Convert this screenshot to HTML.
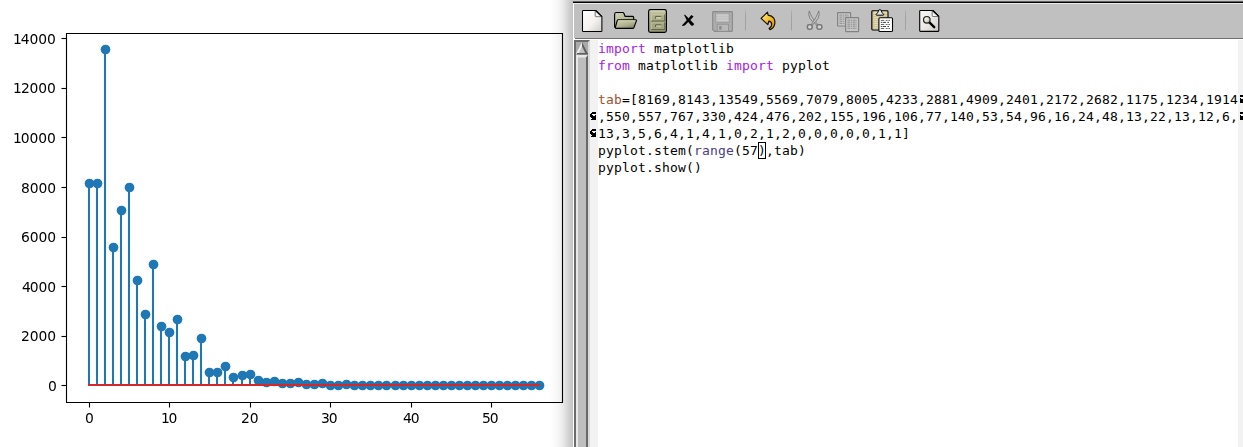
<!DOCTYPE html>
<html lang="en">
<head>
<meta charset="utf-8">
<title>stem plot / emacs</title>
<style>
html,body{margin:0;padding:0;background:#fff;}
body{width:1243px;height:447px;position:relative;overflow:hidden;font-family:"DejaVu Sans","Liberation Sans",sans-serif;}
#shade{position:absolute;left:549px;top:0;width:24px;height:447px;background:linear-gradient(to right,#ffffff 0%,#fcfcfc 16.7%,#f7f7f7 33.3%,#f0f0f0 50%,#e6e6e6 62.5%,#d9d9d9 75%,#cccccc 87.5%,#c3c3c3 100%);}
#plot{position:absolute;left:0;top:0;will-change:transform;}
#emacs{position:absolute;left:573px;top:0;width:670px;height:447px;background:#fff;overflow:hidden;}
#topedge0{position:absolute;left:0;top:0;width:670px;height:1px;background:#c9c9c9;}
#topedge1{position:absolute;left:0;top:1px;width:670px;height:1px;background:#646464;}
#topblack{position:absolute;left:0;top:2px;width:670px;height:1px;background:#000;}
#toolbar{position:absolute;left:0;top:3px;width:670px;height:35px;background:#c0c0c0;border-top:1px solid #ececec;border-left:1px solid #ffffff;box-sizing:border-box;}
#tbbottom{position:absolute;left:2px;top:38px;width:668px;height:1px;background:#707070;}
#leftline{position:absolute;left:0;top:38px;width:1px;height:409px;background:#fcfcfc;}
#sb{position:absolute;left:1px;top:40px;}
#lfringe{position:absolute;left:17px;top:40px;width:8px;height:407px;background:#f2f2f2;}
#rfringe{position:absolute;left:665px;top:40px;width:8px;height:407px;background:#f2f2f2;}
#code{position:absolute;left:25px;top:40px;margin:0;font-family:"DejaVu Sans Mono","Liberation Mono",monospace;font-size:13px;line-height:17px;color:#000;white-space:pre;letter-spacing:0.174px;}
.k{color:#a020f0;}
.v{color:#a0522d;}
.b{color:#483d8b;}
#cursor{position:absolute;left:185px;top:142px;width:8px;height:17px;border:1px solid #000;box-sizing:border-box;}
.fr{position:absolute;}
.tb{position:absolute;top:0;}
.sep{position:absolute;top:8px;width:1px;height:23px;background:#a2a2a2;}
</style>
</head>
<body>
<div id="shade"></div>
<svg id="plot" width="573" height="447" viewBox="0 0 573 447">
<g stroke="#1f77b4" stroke-width="2.08" fill="none">
<path d="M89 385.5V182.82"/>
<path d="M97 385.5V183.46"/>
<path d="M105 385.5V49.40"/>
<path d="M113 385.5V247.30"/>
<path d="M121 385.5V209.85"/>
<path d="M129 385.5V186.88"/>
<path d="M137 385.5V280.43"/>
<path d="M145 385.5V313.95"/>
<path d="M153 385.5V263.66"/>
<path d="M161 385.5V325.86"/>
<path d="M169 385.5V331.54"/>
<path d="M177 385.5V318.89"/>
<path d="M185 385.5V356.26"/>
<path d="M193 385.5V354.80"/>
<path d="M201 385.5V337.93"/>
<path d="M209 385.5V371.76"/>
<path d="M217 385.5V371.59"/>
<path d="M225 385.5V366.38"/>
<path d="M233 385.5V377.22"/>
<path d="M242 385.5V374.89"/>
<path d="M250 385.5V373.60"/>
<path d="M258 385.5V380.39"/>
<path d="M266 385.5V381.56"/>
<path d="M274 385.5V380.54"/>
<path d="M282 385.5V382.77"/>
<path d="M290 385.5V383.49"/>
<path d="M298 385.5V381.93"/>
<path d="M306 385.5V384.09"/>
<path d="M314 385.5V384.06"/>
<path d="M322 385.5V383.02"/>
<path d="M330 385.5V385.00"/>
<path d="M338 385.5V384.80"/>
<path d="M346 385.5V384.21"/>
<path d="M354 385.5V385.08"/>
<path d="M362 385.5V384.85"/>
<path d="M370 385.5V385.08"/>
<path d="M378 385.5V385.10"/>
<path d="M386 385.5V385.25"/>
<path d="M395 385.5V385.08"/>
<path d="M403 385.5V385.33"/>
<path d="M411 385.5V385.28"/>
<path d="M419 385.5V385.25"/>
<path d="M427 385.5V385.30"/>
<path d="M435 385.5V385.38"/>
<path d="M443 385.5V385.30"/>
<path d="M451 385.5V385.38"/>
<path d="M459 385.5V385.40"/>
<path d="M467 385.5V385.35"/>
<path d="M475 385.5V385.38"/>
<path d="M483 385.5V385.35"/>
<path d="M491 385.5V385.40"/>
<path d="M499 385.5V385.40"/>
<path d="M507 385.5V385.40"/>
<path d="M515 385.5V385.40"/>
<path d="M523 385.5V385.40"/>
<path d="M531 385.5V385.38"/>
<path d="M539 385.5V385.38"/>
</g>
<g fill="#1f77b4">
<circle cx="89.5" cy="183.5" r="4.86"/>
<circle cx="97.5" cy="183.5" r="4.86"/>
<circle cx="105.5" cy="49.5" r="4.86"/>
<circle cx="113.5" cy="247.5" r="4.86"/>
<circle cx="121.5" cy="210.5" r="4.86"/>
<circle cx="129.5" cy="187.5" r="4.86"/>
<circle cx="137.5" cy="280.5" r="4.86"/>
<circle cx="145.5" cy="314.5" r="4.86"/>
<circle cx="153.5" cy="264.5" r="4.86"/>
<circle cx="161.5" cy="326.5" r="4.86"/>
<circle cx="169.5" cy="332.5" r="4.86"/>
<circle cx="177.5" cy="319.5" r="4.86"/>
<circle cx="185.5" cy="356.5" r="4.86"/>
<circle cx="193.5" cy="355.5" r="4.86"/>
<circle cx="201.5" cy="338.5" r="4.86"/>
<circle cx="209.5" cy="372.5" r="4.86"/>
<circle cx="217.5" cy="372.5" r="4.86"/>
<circle cx="225.5" cy="366.5" r="4.86"/>
<circle cx="233.5" cy="377.5" r="4.86"/>
<circle cx="242.5" cy="375.5" r="4.86"/>
<circle cx="250.5" cy="374.5" r="4.86"/>
<circle cx="258.5" cy="380.5" r="4.86"/>
<circle cx="266.5" cy="382.5" r="4.86"/>
<circle cx="274.5" cy="381.5" r="4.86"/>
<circle cx="282.5" cy="383.5" r="4.86"/>
<circle cx="290.5" cy="383.5" r="4.86"/>
<circle cx="298.5" cy="382.5" r="4.86"/>
<circle cx="306.5" cy="384.5" r="4.86"/>
<circle cx="314.5" cy="384.5" r="4.86"/>
<circle cx="322.5" cy="383.5" r="4.86"/>
<circle cx="330.5" cy="385.5" r="4.86"/>
<circle cx="338.5" cy="385.5" r="4.86"/>
<circle cx="346.5" cy="384.5" r="4.86"/>
<circle cx="354.5" cy="385.5" r="4.86"/>
<circle cx="362.5" cy="385.5" r="4.86"/>
<circle cx="370.5" cy="385.5" r="4.86"/>
<circle cx="378.5" cy="385.5" r="4.86"/>
<circle cx="386.5" cy="385.5" r="4.86"/>
<circle cx="395.5" cy="385.5" r="4.86"/>
<circle cx="403.5" cy="385.5" r="4.86"/>
<circle cx="411.5" cy="385.5" r="4.86"/>
<circle cx="419.5" cy="385.5" r="4.86"/>
<circle cx="427.5" cy="385.5" r="4.86"/>
<circle cx="435.5" cy="385.5" r="4.86"/>
<circle cx="443.5" cy="385.5" r="4.86"/>
<circle cx="451.5" cy="385.5" r="4.86"/>
<circle cx="459.5" cy="385.5" r="4.86"/>
<circle cx="467.5" cy="385.5" r="4.86"/>
<circle cx="475.5" cy="385.5" r="4.86"/>
<circle cx="483.5" cy="385.5" r="4.86"/>
<circle cx="491.5" cy="385.5" r="4.86"/>
<circle cx="499.5" cy="385.5" r="4.86"/>
<circle cx="507.5" cy="385.5" r="4.86"/>
<circle cx="515.5" cy="385.5" r="4.86"/>
<circle cx="523.5" cy="385.5" r="4.86"/>
<circle cx="531.5" cy="385.5" r="4.86"/>
<circle cx="539.5" cy="385.5" r="4.86"/>
</g>
<path d="M88 385H540" stroke="#d62728" stroke-width="2.08" fill="none"/>
<g fill="#000">
<rect x="88.945" y="403" width="1.11" height="4.5"/>
<rect x="168.945" y="403" width="1.11" height="4.5"/>
<rect x="249.945" y="403" width="1.11" height="4.5"/>
<rect x="329.945" y="403" width="1.11" height="4.5"/>
<rect x="410.945" y="403" width="1.11" height="4.5"/>
<rect x="490.945" y="403" width="1.11" height="4.5"/>
<rect x="61.5" y="384.945" width="4.5" height="1.11"/>
<rect x="61.5" y="335.945" width="4.5" height="1.11"/>
<rect x="61.5" y="285.945" width="4.5" height="1.11"/>
<rect x="61.5" y="236.945" width="4.5" height="1.11"/>
<rect x="61.5" y="186.945" width="4.5" height="1.11"/>
<rect x="61.5" y="136.945" width="4.5" height="1.11"/>
<rect x="61.5" y="87.945" width="4.5" height="1.11"/>
<rect x="61.5" y="37.945" width="4.5" height="1.11"/>
</g>
<path d="M66.5 33.5H562.5V402.5H66.5Z" fill="none" stroke="#000" stroke-width="1.11"/>
<g font-family="'DejaVu Sans','Liberation Sans',sans-serif" font-size="13.89px" fill="#000">
<text x="12.93 20.64 29.48 38.32 46.91" y="43.5">14000</text>
<text x="12.93 20.89 29.48 38.32 46.91" y="93.0">12000</text>
<text x="12.93 20.64 29.48 38.32 46.91" y="142.5">10000</text>
<text x="20.89 29.73 38.57 47.16" y="192.5">8000</text>
<text x="20.89 29.73 38.57 47.16" y="242.0">6000</text>
<text x="21.89 29.73 38.45 47.28" y="291.5">4000</text>
<text x="20.89 29.73 38.45 47.28" y="341.0">2000</text>
<text x="47.91" y="390.5">0</text>
<text x="84.95" y="422.5">0</text>
<text x="160.91 168.62" y="422.5">10</text>
<text x="240.91 249.75" y="422.5">20</text>
<text x="320.91 328.75" y="422.5">30</text>
<text x="402.91 410.75" y="422.5">40</text>
<text x="481.91 489.75" y="422.5">50</text>
</g>
</svg>
<div id="emacs">
 <div id="topedge0"></div><div id="topedge1"></div><div id="topblack"></div>
 <div id="toolbar"></div>
 <div id="tbbottom"></div>
 <div id="leftline"></div>
 <svg id="sb" width="16" height="407" viewBox="0 0 16 407">
  <rect x="0" y="0" width="16" height="407" fill="#aaaaaa"/>
  <rect x="14" y="0" width="2" height="407" fill="#dadada"/>
  <path d="M0 0H16L14 2H2V407H0Z" fill="#6c6c6c"/>
  <path d="M8 2L2 14H14Z" fill="#c0c0c0"/>
  <path d="M8 2L2 14H4.3L8 6.2Z" fill="#ececec"/>
  <path d="M8 2L14 14H11.7L8 6.2Z" fill="#5e5e5e"/>
  <path d="M2.6 13L3.6 14.6H14V13Z" fill="#5e5e5e"/>
  <rect x="2" y="15" width="12" height="392" fill="#bebebe"/>
  <path d="M2 15H14L12 17.6H4V407H2Z" fill="#e8e8e8"/>
  <path d="M14 15V407H12V17.6Z" fill="#686868"/>
 </svg>
 <div id="lfringe"></div><div id="rfringe"></div>
<pre id="code"><span class="k">import</span> matplotlib
<span class="k">from</span> matplotlib <span class="k">import</span> pyplot

<span class="v">tab</span>=[8169,8143,13549,5569,7079,8005,4233,2881,4909,2401,2172,2682,1175,1234,1914
,550,557,767,330,424,476,202,155,196,106,77,140,53,54,96,16,24,48,13,22,13,12,6,
13,3,5,6,4,1,4,1,0,2,1,2,0,0,0,0,0,1,1]
pyplot.stem(<span class="b">range</span>(57),tab)
pyplot.show()</pre>
 <div id="cursor"></div>
 <!-- fringe continuation arrows -->
 <svg class="fr" style="left:17px;top:112px" width="8" height="8" viewBox="0 0 8 8" shape-rendering="crispEdges"><path fill="#000" d="M2 0h4v1h-4zM1 1h5v1h-5zM0 2h2v1h-2zM0 3h3v1h-3zM5 3h1v1h-1zM0 4h6v1h-6zM1 5h5v1h-5zM2 6h4v1h-4zM1 7h5v1h-5z"/></svg>
 <svg class="fr" style="left:17px;top:129px" width="8" height="8" viewBox="0 0 8 8" shape-rendering="crispEdges"><path fill="#000" d="M2 0h4v1h-4zM1 1h5v1h-5zM0 2h2v1h-2zM0 3h3v1h-3zM5 3h1v1h-1zM0 4h6v1h-6zM1 5h5v1h-5zM2 6h4v1h-4zM1 7h5v1h-5z"/></svg>
 <svg class="fr" style="left:665px;top:95px" width="8" height="8" viewBox="0 0 8 8" shape-rendering="crispEdges"><path fill="#000" d="M2 0h4v1h-4zM2 1h5v1h-5zM6 2h2v1h-2zM2 3h1v1h-1zM5 3h3v1h-3zM2 4h6v1h-6zM2 5h5v1h-5zM2 6h4v1h-4zM2 7h5v1h-5z"/></svg>
 <svg class="fr" style="left:665px;top:112px" width="8" height="8" viewBox="0 0 8 8" shape-rendering="crispEdges"><path fill="#000" d="M2 0h4v1h-4zM2 1h5v1h-5zM6 2h2v1h-2zM2 3h1v1h-1zM5 3h3v1h-3zM2 4h6v1h-6zM2 5h5v1h-5zM2 6h4v1h-4zM2 7h5v1h-5z"/></svg>
 <svg id="icons" width="670" height="40" viewBox="573 0 670 40" style="position:absolute;left:0;top:0">
  <defs>
   <linearGradient id="pg" x1="0" y1="0" x2="1" y2="1"><stop offset="0" stop-color="#ffffff"/><stop offset="0.55" stop-color="#f4f3f1"/><stop offset="1" stop-color="#cfccc6"/></linearGradient>
   <linearGradient id="fold" x1="0" y1="1" x2="1" y2="0"><stop offset="0" stop-color="#ffffff"/><stop offset="0.5" stop-color="#f4f4f4"/><stop offset="1" stop-color="#d4d4d4"/></linearGradient>
   <linearGradient id="fback" x1="0" y1="0" x2="1" y2="1"><stop offset="0" stop-color="#d2d4b6"/><stop offset="0.5" stop-color="#b6b896"/><stop offset="1" stop-color="#a0a280"/></linearGradient>
   <linearGradient id="ffront" x1="0.2" y1="0" x2="0.8" y2="1"><stop offset="0" stop-color="#cfd1b0"/><stop offset="0.55" stop-color="#b2b490"/><stop offset="1" stop-color="#7f8164"/></linearGradient>
   <linearGradient id="cab" x1="0" y1="0" x2="0" y2="1"><stop offset="0" stop-color="#c8caa6"/><stop offset="0.25" stop-color="#b6b892"/><stop offset="1" stop-color="#989a76"/></linearGradient>
   <linearGradient id="undo" x1="0" y1="0" x2="1" y2="1"><stop offset="0" stop-color="#fff2a8"/><stop offset="0.4" stop-color="#f9c938"/><stop offset="0.8" stop-color="#e09a10"/><stop offset="1" stop-color="#b07000"/></linearGradient>
   <linearGradient id="clipb" x1="0" y1="0" x2="1" y2="0"><stop offset="0" stop-color="#b9ae82"/><stop offset="0.18" stop-color="#e9e1b8"/><stop offset="1" stop-color="#ddd3a6"/></linearGradient>
   <linearGradient id="pg2" x1="0" y1="0" x2="1" y2="1"><stop offset="0" stop-color="#f8f8f7"/><stop offset="0.5" stop-color="#eceae7"/><stop offset="1" stop-color="#cbc8c2"/></linearGradient>
   <linearGradient id="sepg" x1="0" y1="0" x2="0" y2="1"><stop offset="0" stop-color="#b4b4b4"/><stop offset="0.3" stop-color="#a2a2a2"/><stop offset="0.9" stop-color="#a0a0a0"/><stop offset="1" stop-color="#b0b0b0"/></linearGradient>
   <radialGradient id="lens" cx="0.4" cy="0.4" r="0.7"><stop offset="0" stop-color="#f4f5ee"/><stop offset="1" stop-color="#b9bda6"/></radialGradient>
  </defs>
  <!-- new -->
  <path d="M583.2 10.5H595.8L601.9 16.6V30.8Q601.9 31.5 601.2 31.5H583.2Q582.5 31.5 582.5 30.8V11.2Q582.5 10.5 583.2 10.5Z" fill="url(#pg)" stroke="#000" stroke-width="1.05" stroke-linejoin="round"/>
  <path d="M595.2 10.9V16Q595.2 16.7 595.9 16.7H601.6Z" fill="url(#fold)" stroke="#555555" stroke-width="0.8" stroke-linejoin="round"/><path d="M595.8 10.5L601.9 16.6" stroke="#000" stroke-width="1.1" fill="none"/>
  <!-- open folder -->
  <path d="M614.6 14.4Q614.6 12.5 616.4 12.5H622.6Q623.6 12.5 624 13.5L625 16.3H632.6Q633.7 16.3 633.7 17.4V20.5L616 27.9Q614.6 27.6 614.6 26.4Z" fill="url(#fback)" stroke="#000" stroke-width="1.15" stroke-linejoin="round"/>
  <path d="M618.2 19.7H635.6Q636.8 19.7 636.4 20.9L634 27.4Q633.6 28.3 632.6 28.3H616.2Q615.1 28.3 615.4 27.2L617.2 20.6Q617.5 19.7 618.2 19.7Z" fill="url(#ffront)" stroke="#000" stroke-width="1.15" stroke-linejoin="round"/><path d="M618.4 20.8H635.2" stroke="#dcdebe" stroke-width="0.8" fill="none"/>
  <!-- cabinet -->
  <rect x="648.6" y="9.6" width="17.8" height="22.8" rx="1.8" ry="1.8" fill="url(#cab)" stroke="#000" stroke-width="1.15"/>
  <path d="M650.6 11H664.6" stroke="#d9dbb9" stroke-width="1" fill="none"/>
  <rect x="650.8" y="14.6" width="14" height="6.2" fill="#acae88" stroke="none"/>
  <path d="M651.2 21H664.8V14.4" stroke="#5d5f45" stroke-width="1" fill="none"/>
  <path d="M651.4 20.6V14.8H664.2" stroke="#cfd1ad" stroke-width="0.8" fill="none"/>
  <rect x="655.6" y="16.4" width="5.4" height="2.4" fill="#cccea9"/>
  <path d="M655.6 18.8V16.4H661.2" stroke="#5d5f45" stroke-width="1" fill="none"/>
  <rect x="650.8" y="22.6" width="14" height="6.8" fill="#a3a57f" stroke="none"/>
  <path d="M651.2 29.6H664.8V22.4" stroke="#5d5f45" stroke-width="1" fill="none"/>
  <path d="M651.4 29.2V22.9H664.2" stroke="#c3c5a1" stroke-width="0.8" fill="none"/>
  <rect x="655.6" y="24.8" width="5.4" height="2.2" fill="#c3c5a0"/>
  <path d="M655.6 27V24.8H661.2" stroke="#5d5f45" stroke-width="1" fill="none"/>
  <!-- X -->
  <path d="M684 14.7L685 14.7L688.6 18.2L691.3 15L693.6 16.6L690.3 19.9L694.2 24L692.9 25.8L691.2 25.6L688.2 21.9L684.8 25.6L682 25.9L682.3 24.9L686.7 20.2Z" fill="#000"/>
  <!-- floppy (disabled) -->
  <path d="M712.7 12.4Q712.7 11.6 713.5 11.6H731.6Q732.4 11.6 732.4 12.4V30.6Q732.4 31.4 731.6 31.4H714.6L712.7 29.5Z" fill="#adadad" stroke="#8a8a8a" stroke-width="1.15" stroke-linejoin="round"/>
  <rect x="715.8" y="12.2" width="13.4" height="10" fill="#c2c2c2" stroke="#969696" stroke-width="0.8"/>
  <rect x="716.2" y="12.4" width="12.6" height="1.4" fill="#a2a2a2"/>
  <path d="M716.4 15.2H728.6M716.4 17.9H728.6M716.4 20.4H728.6" stroke="#cecece" stroke-width="0.9" fill="none"/>
  <rect x="717.2" y="24.2" width="11.2" height="7" fill="#b9b9b9" stroke="#8e8e8e" stroke-width="0.8"/>
  <rect x="719.2" y="26" width="2.4" height="3.6" fill="#8c8c8c"/>
  <!-- separators -->
  <rect x="745" y="10" width="1" height="21" fill="url(#sepg)"/>
  <rect x="791" y="10" width="1" height="21" fill="url(#sepg)"/>
  <rect x="905" y="10" width="1" height="21" fill="url(#sepg)"/>
  <!-- undo -->
  <path d="M761.1 18.4L767.5 12.1L768.1 15.1Q771.8 15.5 773.8 18.2Q775.4 20.6 774.7 24.2Q773.8 28.4 770.1 29.6L769.1 28.5Q771.9 26.8 771.7 23.8Q771.3 21.4 768.7 21.1L767.9 24.6Z" fill="url(#undo)" stroke="#140c00" stroke-width="1.15" stroke-linejoin="round"/>
  <!-- scissors (disabled) -->
  <path d="M809.2 10.9Q808 14.4 809.9 18.4Q811.4 21 817.2 25.4L817.9 24.5Q813.2 19.8 811.7 16.6Q810.3 13.4 809.2 10.9Z" fill="#c4c4c4" stroke="#787878" stroke-width="0.9" stroke-linejoin="round"/>
  <path d="M818.8 10.9Q820 14.4 818.1 18.4Q816.6 21 812 25.4L811.3 24.5Q814.8 19.8 816.3 16.6Q817.7 13.4 818.8 10.9Z" fill="#c4c4c4" stroke="#787878" stroke-width="0.9" stroke-linejoin="round"/>
  <rect x="807.4" y="24.8" width="4.8" height="4.4" rx="1.6" fill="#d6d6d6" stroke="#787878" stroke-width="1.6"/>
  <rect x="817" y="24.8" width="4.8" height="4.4" rx="1.6" fill="#d6d6d6" stroke="#787878" stroke-width="1.6"/>
  <!-- copy (disabled) -->
  <rect x="837.6" y="12.6" width="13" height="13.4" rx="0.5" fill="#c6c6c6" stroke="#828282" stroke-width="1.15"/>
  <path d="M839.4 15.1H848.8M839.4 17.1H848.8M839.4 19.2H848.8M839.4 21.3H848.8M839.4 23.4H848.8" stroke="#8f8f8f" stroke-width="1" stroke-dasharray="2.6 0.7 1.6 0.7" fill="none"/>
  <rect x="845.6" y="17.6" width="13" height="14" rx="0.5" fill="#c6c6c6" stroke="#828282" stroke-width="1.15"/>
  <path d="M847.4 20.2H856.8M847.4 22.2H856.8M847.4 24.2H856.8M847.4 26.2H856.8M847.4 28.3H856.8" stroke="#8f8f8f" stroke-width="1" stroke-dasharray="2.6 0.7 1.6 0.7" fill="none"/>
  <!-- paste -->
  <rect x="871.8" y="10.8" width="16.2" height="19.2" rx="0.9" fill="url(#clipb)" stroke="#000" stroke-width="1.1"/>
  <path d="M873.6 14.4H887M873.6 16.4H887M873.6 18.4H887M873.6 20.4H887M873.6 22.4H887M873.6 24.4H887M873.6 26.4H887M873.6 28.2H887" stroke="#c6bc90" stroke-width="0.9" fill="none"/>
  <path d="M876 14.6L878 12.2Q878.2 9.6 879.9 9.6Q881.6 9.6 881.8 12.2L883.8 14.6Q883.8 15.2 883 15.2H876.8Q876 15.2 876 14.6Z" fill="#e6e6e6" stroke="#000" stroke-width="1" stroke-linejoin="round"/>
  <rect x="878.9" y="17.7" width="13.6" height="13.8" rx="1.1" fill="#ffffff" stroke="#000" stroke-width="1.1"/>
  <path d="M880.8 20.4H890.6M880.8 24.5H890.6M880.8 28.5H890.6" stroke="#555555" stroke-width="0.9" stroke-dasharray="3.4 1.6 1.8 0.8 1.6 2" fill="none"/>
  <path d="M880.8 22.4H890.6M880.8 26.5H890.6" stroke="#444444" stroke-width="1" stroke-dasharray="1.4 0.6 3.2 1.4 1.6 2" fill="none"/>
  <!-- search -->
  <path d="M920.4 10.5H932.9L938.8 16.4V30.8Q938.8 31.4 938.2 31.4H920.4Q919.7 31.4 919.7 30.8V11.2Q919.7 10.5 920.4 10.5Z" fill="url(#pg2)" stroke="#000" stroke-width="1.1" stroke-linejoin="round"/>
  <path d="M932.2 10.9V15.8Q932.2 16.5 932.9 16.5H938.5Z" fill="url(#fold)" stroke="#555555" stroke-width="0.8" stroke-linejoin="round"/><path d="M932.9 10.5L938.8 16.4" stroke="#000" stroke-width="1.1" fill="none"/>
  <path d="M929.4 22.4L934.2 27.2" stroke="#000" stroke-width="2.4" stroke-linecap="round" fill="none"/>
  <circle cx="926.8" cy="19.8" r="3.3" fill="url(#lens)" stroke="#222" stroke-width="1.2"/>
</svg>

</div>
</body>
</html>
